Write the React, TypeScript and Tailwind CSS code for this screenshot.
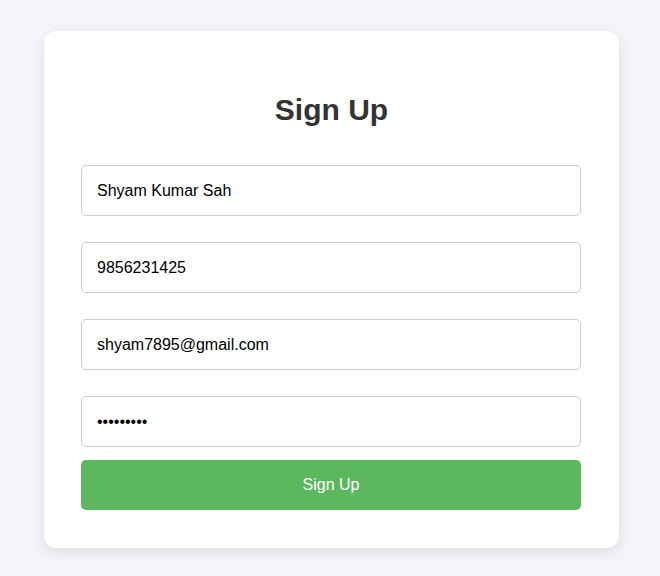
import { useState } from 'react'

export default function App() {
  const [name, setName] = useState('Shyam Kumar Sah')
  const [phone, setPhone] = useState('9856231425')
  const [email, setEmail] = useState('shyam7895@gmail.com')
  const [password, setPassword] = useState('shyam1234')

  const inputCls =
    'block w-[500px] h-[51px] ml-[37px] bg-white border border-[#cccccc] rounded-[5px] px-[15px] text-[16px] text-black outline-none'

  return (
    <div className="min-h-screen bg-[#f4f4f9] pl-[44px] pt-[31px] font-['Liberation_Sans',Arial,sans-serif]">
      <div className="w-[575px] h-[517px] bg-white rounded-[12px] shadow-[0_4px_14px_rgba(0,0,0,0.1)] pt-[62px] pb-[38px]">
        <h2 className="text-center text-[30px] leading-[34px] font-bold text-[#333333] mb-[38px]">Sign Up</h2>
        <form onSubmit={e => e.preventDefault()} className="flex flex-col">
          <input type="text" value={name} onChange={e => setName(e.target.value)} className={inputCls} />
          <input type="text" value={phone} onChange={e => setPhone(e.target.value)} className={inputCls + ' mt-[26px]'} />
          <input type="email" value={email} onChange={e => setEmail(e.target.value)} className={inputCls + ' mt-[26px]'} />
          <input type="password" value={password} onChange={e => setPassword(e.target.value)} className={inputCls + ' mt-[26px]'} />
          <button
            type="submit"
            className="block w-[500px] h-[50px] ml-[37px] mt-[13px] bg-[#5cb85c] rounded-[5px] text-white text-[16px]"
          >
            Sign Up
          </button>
        </form>
      </div>
    </div>
  )
}
